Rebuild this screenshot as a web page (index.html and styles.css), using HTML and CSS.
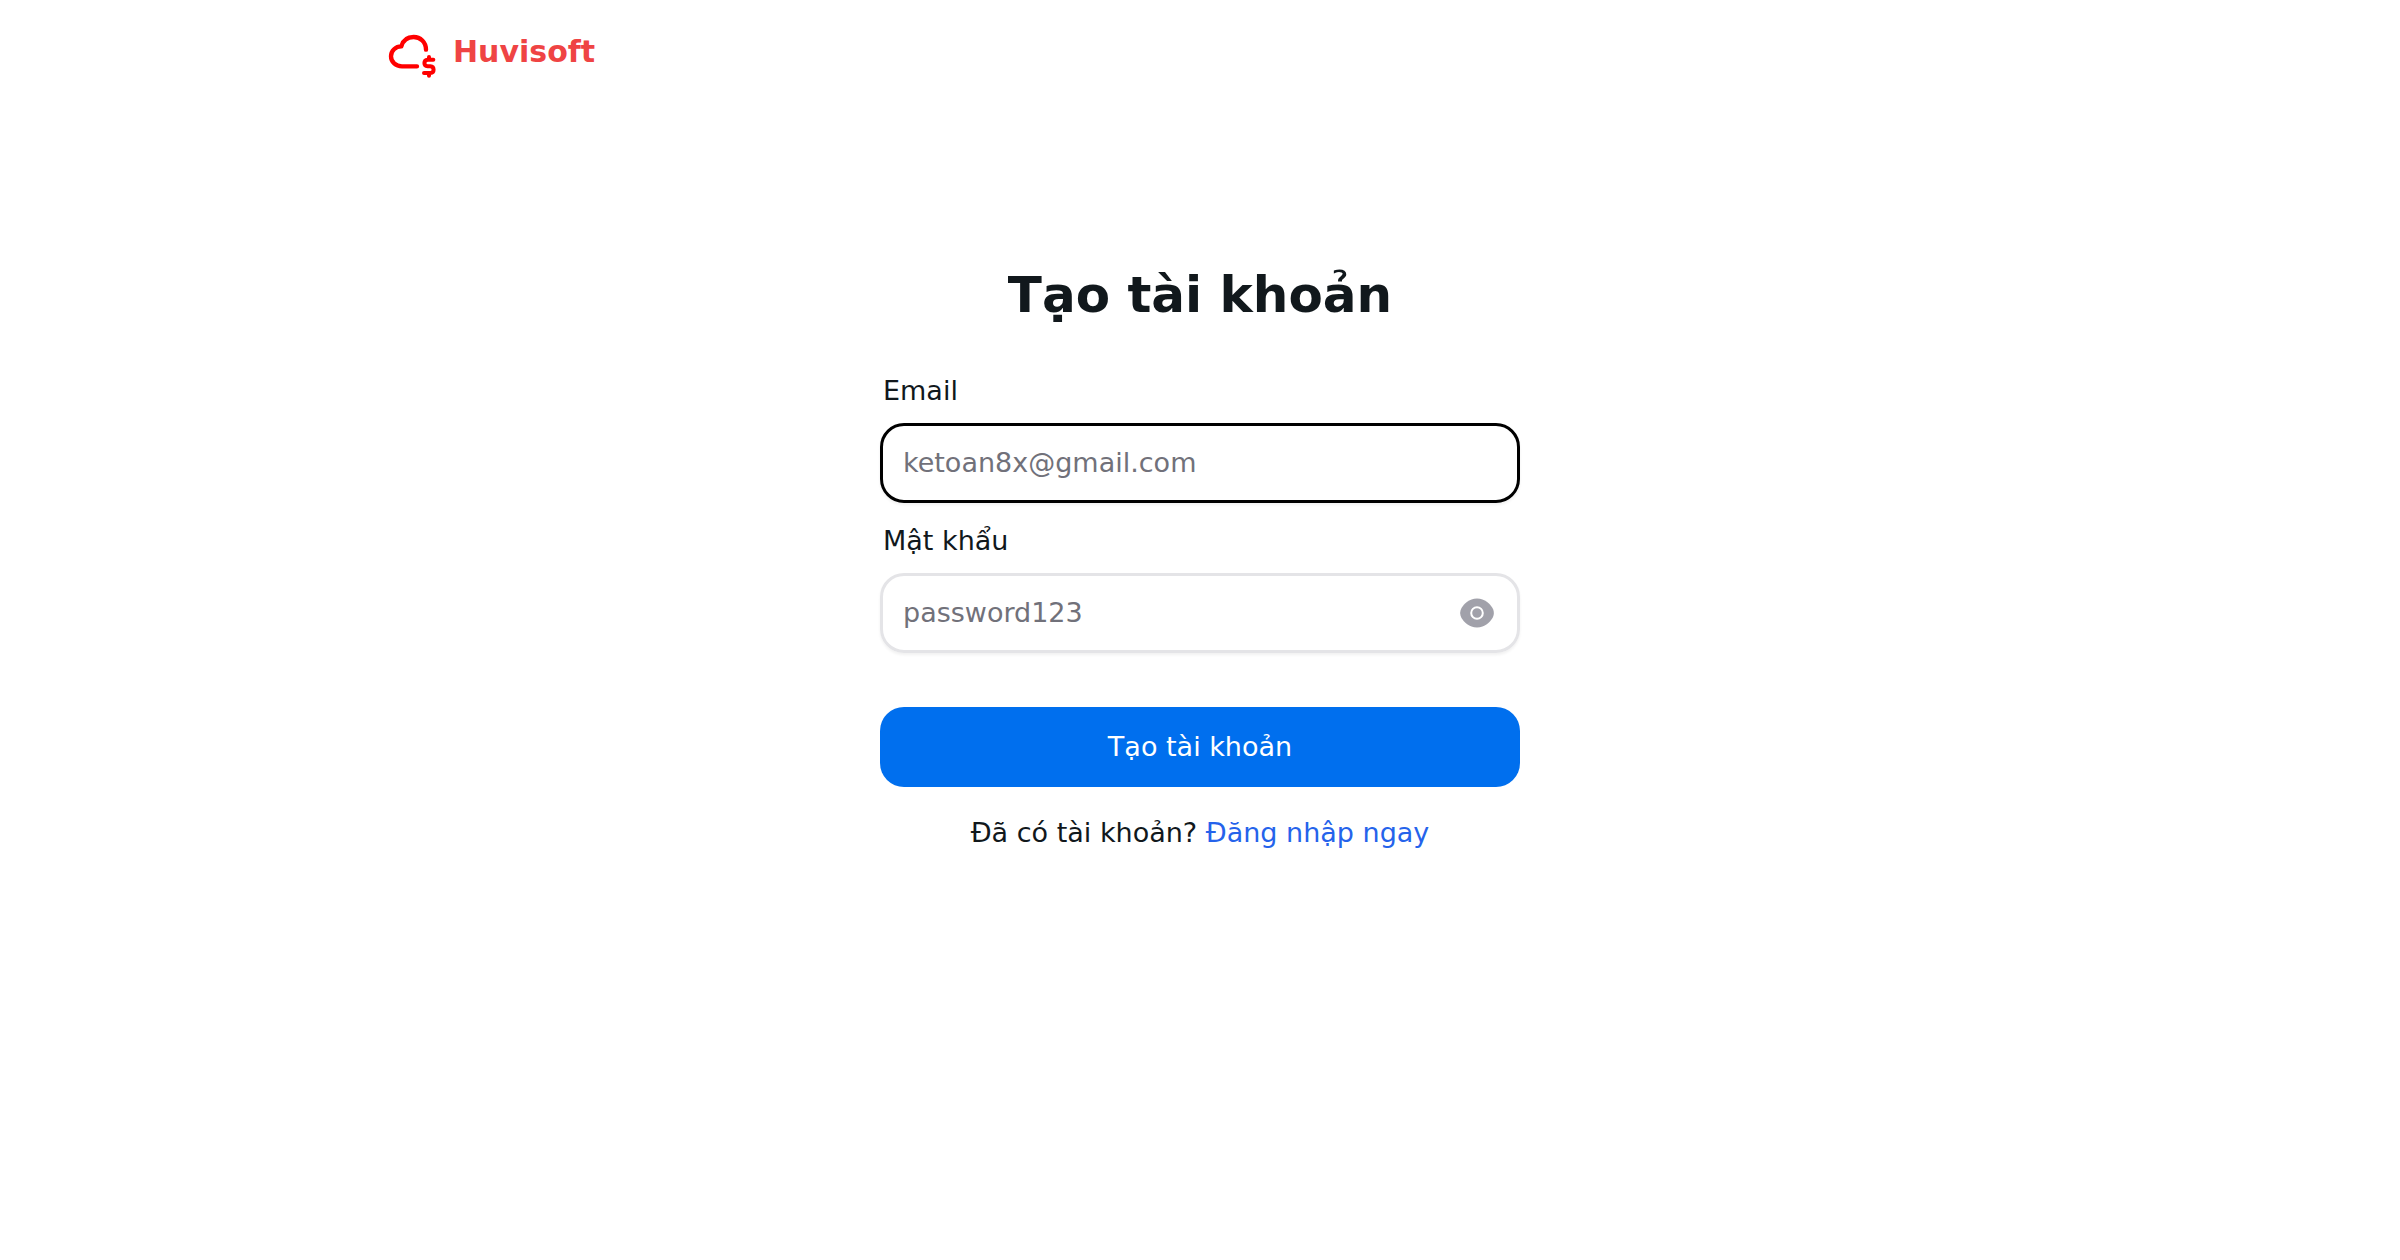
FILE: index.html
```html
<!DOCTYPE html>
<html lang="vi">
<head>
    <meta charset="UTF-8">
    <meta name="viewport" content="width=device-width, initial-scale=1.0">
    <title>Tạo tài khoản - Huvisoft</title>
    <link rel="stylesheet" href="styles.css">
</head>
<body>
    <header class="site-header">
        <a class="brand" href="#">
            <svg class="brand-icon" viewBox="51 37 150 138" fill="none" stroke="#ff0000" stroke-width="13" stroke-linecap="round" stroke-linejoin="round" aria-hidden="true">
                <path d="M141 140H96C77 140 63 127 63 110C63 93 77 80 94 80C99 62 113 52 131 52C151 52 168 68 168 90"/>
                <path stroke-width="12" d="M190 120H173C160 121 160 139 173 140H181C194 141 194 159 181 160H162M177 112V119M177 161V168"/>
            </svg>
            <span class="brand-name">Huvisoft</span>
        </a>
    </header>

    <main class="signup">
        <h1>Tạo tài khoản</h1>
        <form class="signup-form">
            <div class="field">
                <label for="email">Email</label>
                <div class="input-box focused">
                    <input type="email" id="email" placeholder="ketoan8x@gmail.com">
                </div>
            </div>
            <div class="field">
                <label for="password">Mật khẩu</label>
                <div class="input-box">
                    <input type="password" id="password" placeholder="password123">
                    <button type="button" class="toggle-password" aria-label="Hiện mật khẩu">
                        <svg viewBox="0 0 34 30" aria-hidden="true">
                            <path fill="#a1a1aa" d="M17 0.5C25 0.5 30 6 32.5 10C34.3 13 34.3 17 32.5 20C30 24 25 29.5 17 29.5C9 29.5 4 24 1.5 20C-0.3 17 -0.3 13 1.5 10C4 6 9 0.5 17 0.5Z"/>
                            <circle cx="17" cy="15" r="5.8" fill="none" stroke="#fff" stroke-width="2"/>
                        </svg>
                    </button>
                </div>
            </div>
            <button type="submit" class="submit-btn">Tạo tài khoản</button>
        </form>
        <p class="login-hint">Đã có tài khoản? <a href="#">Đăng nhập ngay</a></p>
    </main>
</body>
</html>
```
FILE: styles.css
```css
* {
    box-sizing: border-box;
}
body {
    margin: 0;
    background-color: #fff;
    color: #11181c;
    font-family: "DejaVu Sans", sans-serif;
    font-size: 27px;
    line-height: 40px;
}
a {
    text-decoration: none;
}
.site-header {
    display: flex;
    max-width: 1706px;
    margin: 0 auto;
    padding: 32px 40px;
}
.brand {
    display: flex;
    align-items: flex-start;
    gap: 16px;
}
.brand-icon {
    width: 50px;
    height: 46px;
}
.brand-name {
    color: #ef4444;
    font-size: 30px;
    font-weight: bold;
}
.signup {
    max-width: 640px;
    margin: 0 auto;
    padding-top: 155px;
}
h1 {
    margin: 0 0 46px;
    font-size: 50px;
    line-height: 60px;
    text-align: center;
}
.field {
    margin-bottom: 18px;
}
.field label {
    display: block;
    margin: 0 3px 12px;
}
.input-box {
    display: flex;
    align-items: center;
    height: 80px;
    padding: 0 20px;
    border: 3px solid #e4e4e7;
    border-radius: 24px;
    box-shadow: 0 2px 3px rgba(0, 0, 0, 0.06);
}
.input-box.focused {
    border-color: #000;
}
.input-box input {
    flex: 1;
    min-width: 0;
    padding: 0;
    border: none;
    outline: none;
    background: none;
    color: inherit;
    font: inherit;
}
.input-box input::placeholder {
    color: #71717a;
    opacity: 1;
}
.toggle-password {
    display: flex;
    padding: 0 3px;
    border: none;
    background: none;
    cursor: pointer;
}
.toggle-password svg {
    width: 34px;
    height: 30px;
}
.submit-btn {
    display: block;
    width: 100%;
    height: 80px;
    margin-top: 54px;
    border: none;
    border-radius: 24px;
    background-color: #006fee;
    color: #fff;
    font: inherit;
    cursor: pointer;
}
.login-hint {
    margin: 26px 0;
    text-align: center;
}
.login-hint a {
    color: #2563eb;
}
```
